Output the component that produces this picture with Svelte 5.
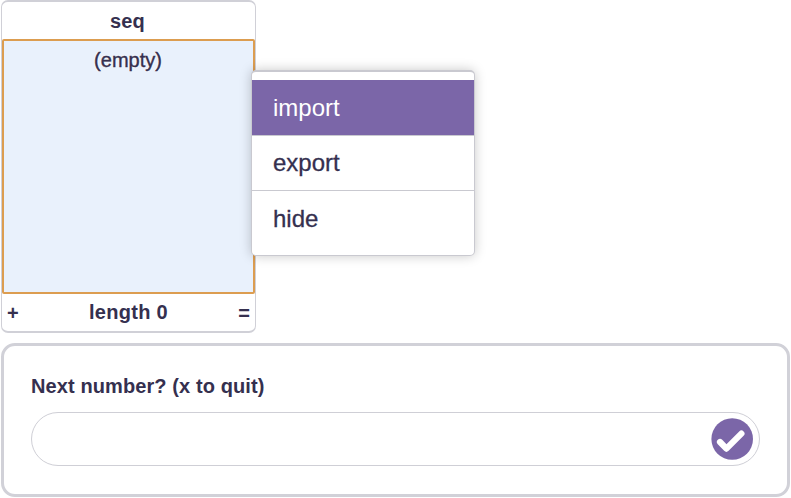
<script>
  const items = ['import', 'export', 'hide'];
  let active = $state('import');
  let answer = $state('');
</script>

<main>
  <div class="monitor">
    <div class="title">seq</div>
    <div class="rows"><span>(empty)</span></div>
    <div class="footer">
      <b class="sign">+</b>
      <span class="length">length 0</span>
      <b class="sign">=</b>
    </div>
    <div class="menu" role="menu">
      {#each items as item}
        <div
          class="item"
          class:active={active === item}
          role="menuitem"
          tabindex="-1"
          onmouseenter={() => (active = item)}
        >{item}</div>
      {/each}
    </div>
  </div>

  <section class="prompt">
    <label for="answer">Next number? (x to quit)</label>
    <div class="field">
      <input id="answer" type="text" bind:value={answer} />
      <button aria-label="Submit">
        <svg viewBox="0 0 42 42" width="42" height="42">
          <circle cx="21.2" cy="21" r="20.8" fill="#7b66a8" />
          <path d="M9 24 L15.4 30.6 L30.4 15.6" fill="none" stroke="#fff" stroke-width="6.2" stroke-linecap="round" stroke-linejoin="round" />
        </svg>
      </button>
    </div>
  </section>
</main>

<style>
  :global(body) {
    background: #fff;
  }
  main {
    box-sizing: border-box;
    width: 791px;
    height: 498px;
    padding: 0 1px;
    overflow: hidden;
    font-family: 'Liberation Sans', Arial, sans-serif;
    color: #35304f;
    display: flex;
    flex-direction: column;
    gap: 10px;
  }
  .monitor {
    position: relative;
    box-sizing: border-box;
    width: 255px;
    height: 333px;
    border: 2px solid #d0d0d7;
    border-left-width: 1px;
    border-right-width: 1px;
    border-radius: 7px;
    display: flex;
    flex-direction: column;
    font-size: 20px;
  }
  .title {
    flex: none;
    height: 37px;
    line-height: 38px;
    text-align: center;
    font-weight: bold;
    letter-spacing: 0.2px;
    padding-right: 2px;
  }
  .rows {
    flex: none;
    box-sizing: border-box;
    height: 255px;
    border: 2px solid #dc9d50;
    border-radius: 2px;
    background: #e9f1fc;
    text-align: center;
    line-height: 39px;
    padding-right: 1px;
  }
  .rows span {
    -webkit-text-stroke: 0.4px #35304f;
    text-shadow: 0 0 2px #fff, 0 0 2px #fff;
  }
  .footer {
    flex: 1;
    display: flex;
    justify-content: space-between;
    line-height: 37px;
    padding: 0 5px;
    font-weight: bold;
  }
  .length {
    letter-spacing: 0.3px;
  }
  .sign {
    line-height: 39px;
  }
  .menu {
    position: absolute;
    left: 249px;
    top: 68px;
    box-sizing: border-box;
    width: 224px;
    height: 186px;
    padding: 8px 0 0;
    border: 1px solid #c9c9d0;
    border-top-width: 2px;
    border-radius: 5px;
    background: #fff;
    box-shadow: 0 0 12px rgba(0, 0, 0, 0.22);
  }
  .item {
    box-sizing: border-box;
    height: 55px;
    padding-left: 21px;
    border-top: 1px solid #c9c9d0;
    font-size: 24px;
    line-height: 54px;
    -webkit-text-stroke: 0.3px currentColor;
  }
  .item:first-child {
    border-top: 0;
    line-height: 56px;
  }
  .item:last-child {
    line-height: 56px;
  }
  .item.active {
    background: #7b66a8;
    color: #fff;
    -webkit-text-stroke: 0;
  }
  .prompt {
    box-sizing: border-box;
    width: 789px;
    height: 154px;
    border: 3px solid #d1d1d8;
    border-radius: 14px;
    padding: 28px 27px 0;
    display: flex;
    flex-direction: column;
    gap: 14px;
  }
  label {
    font-size: 20px;
    line-height: 24px;
    font-weight: bold;
    letter-spacing: 0.1px;
  }
  .field {
    box-sizing: border-box;
    height: 54px;
    width: 729px;
    border: 1px solid #cfcfd6;
    border-radius: 27px;
    display: flex;
    align-items: center;
    padding: 0 6px 0 26px;
  }
  input {
    flex: 1;
    min-width: 0;
    border: 0;
    outline: 0;
    background: none;
    font: 20px 'Liberation Sans', sans-serif;
  }
  button {
    padding: 0;
    border: 0;
    background: none;
    width: 42px;
    height: 42px;
  }
  svg {
    display: block;
  }
</style>
